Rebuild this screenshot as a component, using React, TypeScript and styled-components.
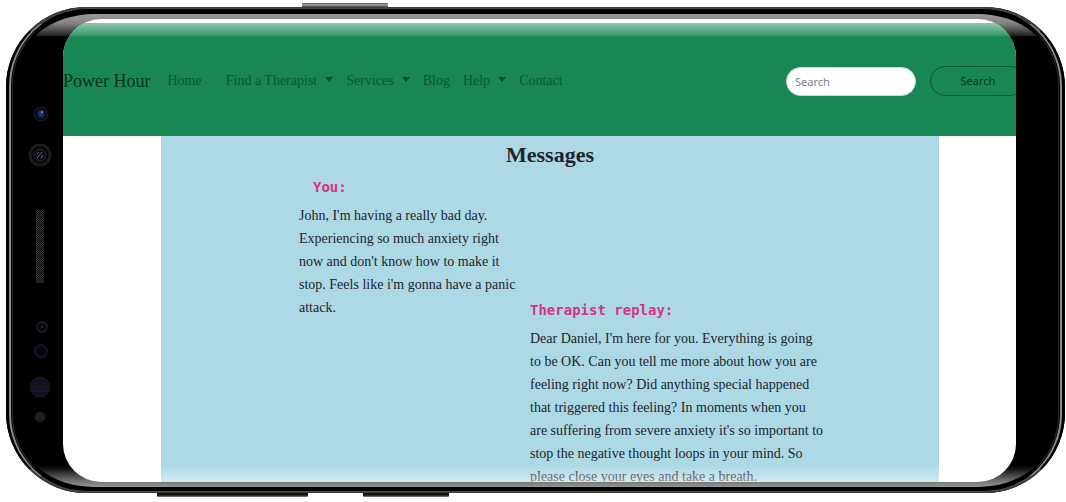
import React from "react";
import styled, { createGlobalStyle } from "styled-components";

const GlobalStyle = createGlobalStyle`
  * { box-sizing: border-box; }
  body {
    margin: 0;
    background: #fff;
    font-family: "Liberation Serif", "Times New Roman", serif;
    color: #212529;
    overflow: hidden;
  }
`;

const Stage = styled.div`
  height: 100vh;
  padding: 7px 1px 9px 6px;
`;

const Device = styled.div`
  position: relative;
  height: 100%;
  display: grid;
  grid-template-columns: 57px minmax(0, 1fr) 49px;
  grid-template-rows: minmax(0, 1fr);
  padding: 12px 0 11px;
  background: #000;
  border-radius: 80px;
`;

const SideKey = styled.span<{ $edge: "top" | "bottom"; $left: number; $width: number }>`
  position: absolute;
  ${(p) => (p.$edge === "top" ? "top: -4px;" : "bottom: -4px;")}
  left: ${(p) => p.$left}px;
  width: ${(p) => p.$width}px;
  height: 5px;
  border-radius: 1px;
  background: ${(p) =>
    p.$edge === "top"
      ? "linear-gradient(#444, #999 30%, #888 50%, #111)"
      : "linear-gradient(#111 60%, #888)"};
`;

const Rim = styled.span`
  position: absolute;
  inset: 0;
  border: 2px solid;
  border-color: #3c3c3c #000 #3c3c3c #000;
  border-radius: 80px;
  pointer-events: none;

  &::before {
    content: "";
    position: absolute;
    inset: -1px 1px;
    border: 1px solid;
    border-width: 1px 2px;
    border-color: #4a4a4a #8c8c8c #4a4a4a #8c8c8c;
    border-radius: 78px;
  }

  &::after {
    content: "";
    position: absolute;
    inset: 1px 4px;
    border: 1px solid;
    border-color: #000 #2a2a2a #000 #2a2a2a;
    border-radius: 75px;
  }
`;

const Gloss = styled.span<{ $edge: "top" | "bottom" }>`
  position: absolute;
  left: 12px;
  right: 11px;
  height: 100px;
  pointer-events: none;
  ${(p) =>
    p.$edge === "top"
      ? `top: 7px;
         border-radius: 76px 76px 0 0 / 60px 60px 0 0;
         background: linear-gradient(rgba(255,255,255,.6), rgba(255,255,255,.52) 9px, rgba(255,255,255,.16) 21px, transparent 23px);`
      : `bottom: 6px;
         border-radius: 0 0 76px 76px / 0 0 60px 60px;
         background: linear-gradient(to top, rgba(255,255,255,.58), rgba(255,255,255,.45) 6px, rgba(255,255,255,.08) 18px, transparent 22px);`}
`;

const Screen = styled.div`
  grid-column: 2;
  overflow: hidden;
  padding-top: 4px;
  background: #fff;
  border-radius: 38px;
`;

const Navbar = styled.header`
  display: flex;
  align-items: center;
  height: 113px;
  padding-top: 3px;
  background: #198754;
`;

const Brand = styled.a`
  margin-right: 17px;
  font-size: 18px;
  line-height: 24px;
  color: #08301d;
  text-decoration: none;
  white-space: nowrap;
`;

const NavList = styled.ul`
  display: flex;
  gap: 13px;
  margin: 0;
  padding: 0;
  list-style: none;
`;

const NavItem = styled.li<{ $spaced?: boolean }>`
  margin-right: ${(p) => (p.$spaced ? 11 : 0)}px;
`;

const NavLink = styled.a<{ $menu?: boolean }>`
  display: flex;
  align-items: center;
  gap: 8px;
  font-size: 14px;
  line-height: 24px;
  color: #0e5535;
  text-decoration: none;
  white-space: nowrap;

  &::after {
    content: "";
    display: ${(p) => (p.$menu ? "block" : "none")};
    border: 4px solid transparent;
    border-top: 5px solid #0b482c;
    border-bottom: 0;
    margin-bottom: 3px;
  }
`;

const SearchForm = styled.form`
  display: flex;
  align-items: center;
  gap: 14px;
  margin: 0 -10px 0 auto;
`;

const SearchInput = styled.input`
  width: 130px;
  height: 29px;
  padding: 0 8px;
  border: 1px solid #ced4da;
  border-radius: 15px;
  background: #fff;
  font: 11px/16px "Noto Sans", sans-serif;
  color: #212529;

  &::placeholder {
    color: #7b8187;
    opacity: 1;
  }
`;

const SearchButton = styled.button`
  width: 96px;
  height: 30px;
  padding: 0;
  border: 1px solid #0f5435;
  border-radius: 15px;
  background: transparent;
  font: 11px/16px "Noto Sans", sans-serif;
  color: #0a3823;
`;

const Conversation = styled.main`
  min-height: 100%;
  margin: 0 77px 0 98px;
  padding-top: 4px;
  background: #add8e6;
`;

const Title = styled.h1`
  margin: 0;
  font-size: 22px;
  line-height: 30px;
  text-align: center;
`;

const Thread = styled.div`
  display: grid;
  grid-template-columns: 224px 295px;
  column-gap: 7px;
  padding-left: 138px;
`;

const Message = styled.article<{ $reply?: boolean }>`
  grid-column: ${(p) => (p.$reply ? 2 : 1)};
  grid-row: ${(p) => (p.$reply ? 2 : 1)};
  margin-top: ${(p) => (p.$reply ? -26 : 0)}px;
`;

const Author = styled.h2<{ $indent?: boolean }>`
  margin: 0;
  padding: 6px 0 6px ${(p) => (p.$indent ? 14 : 0)}px;
  font: bold 14px/22px "DejaVu Sans Mono", monospace;
  color: #d63384;
`;

const Body = styled.p`
  margin: 0;
  font-size: 14px;
  line-height: 23px;
`;

const Sensors = () => (
  <svg width="57" height="440" viewBox="0 12 57 440" aria-hidden="true">
    <defs>
      <pattern id="mesh" width="2" height="2" patternUnits="userSpaceOnUse">
        <rect width="1" height="1" fill="#4a4a4a" />
        <rect x="1" y="1" width="1" height="1" fill="#3a3a3a" />
      </pattern>
      <radialGradient id="lens">
        <stop offset="0" stopColor="#29458f" />
        <stop offset="1" stopColor="#060b2b" />
      </radialGradient>
    </defs>
    <circle cx="35" cy="107" r="7" fill="#0a0b10" stroke="#1d1f27" />
    <circle cx="35" cy="107" r="5" fill="url(#lens)" />
    <circle cx="36" cy="105" r="1" fill="#7d98dc" />
    <circle cx="34" cy="148" r="10" fill="#050505" stroke="#1d1d1d" strokeWidth="3" />
    <circle cx="34" cy="148" r="6" fill="#0c0c13" stroke="#2b2b35" />
    <path d="M31 151l5-6M35 151l2-3M31 147l2-2" stroke="#666677" strokeWidth="1" />
    <rect x="30" y="203" width="8" height="73" fill="url(#mesh)" />
    <circle cx="36" cy="320" r="5" fill="#08080c" stroke="#1c1b22" strokeWidth="2" />
    <circle cx="36" cy="320" r="1" fill="#33303e" />
    <circle cx="35" cy="344" r="6" fill="#060518" stroke="#17152c" strokeWidth="2" />
    <circle cx="34" cy="380" r="10" fill="#12111f" stroke="#1a1928" />
    <path d="M26 376h16M25 380h18M26 384h16" stroke="#1d1b32" />
    <circle cx="34" cy="410" r="5" fill="#202020" stroke="#171717" />
  </svg>
);

const links = [
  { label: "Home", spaced: true },
  { label: "Find a Therapist", menu: true },
  { label: "Services", menu: true },
  { label: "Blog" },
  { label: "Help", menu: true },
  { label: "Contact" },
];

export default function App() {
  return (
    <>
      <GlobalStyle />
      <Stage>
        <Device>
          <SideKey $edge="top" $left={296} $width={86} />
          <SideKey $edge="bottom" $left={151} $width={151} />
          <SideKey $edge="bottom" $left={357} $width={86} />
          <Sensors />
          <Screen>
            <Navbar>
              <Brand href="#">Power Hour</Brand>
              <nav>
                <NavList>
                  {links.map((l) => (
                    <NavItem key={l.label} $spaced={l.spaced}>
                      <NavLink href="#" $menu={l.menu}>{l.label}</NavLink>
                    </NavItem>
                  ))}
                </NavList>
              </nav>
              <SearchForm role="search" onSubmit={(e) => e.preventDefault()}>
                <SearchInput type="search" placeholder="Search" aria-label="Search" />
                <SearchButton type="submit">Search</SearchButton>
              </SearchForm>
            </Navbar>
            <Conversation>
              <Title>Messages</Title>
              <Thread>
                <Message>
                  <Author $indent>You:</Author>
                  <Body>
                    John, I'm having a really bad day. Experiencing so much anxiety right now and
                    don't know how to make it stop. Feels like i'm gonna have a panic attack.
                  </Body>
                </Message>
                <Message $reply>
                  <Author>Therapist replay:</Author>
                  <Body>
                    Dear Daniel, I'm here for you. Everything is going to be OK. Can you tell me
                    more about how you are feeling right now? Did anything special happened that
                    triggered this feeling? In moments when you are suffering from severe anxiety
                    it's so important to stop the negative thought loops in your mind. So please
                    close your eyes and take a breath.
                  </Body>
                </Message>
              </Thread>
            </Conversation>
          </Screen>
          <Gloss $edge="top" />
          <Gloss $edge="bottom" />
          <Rim />
        </Device>
      </Stage>
    </>
  );
}
